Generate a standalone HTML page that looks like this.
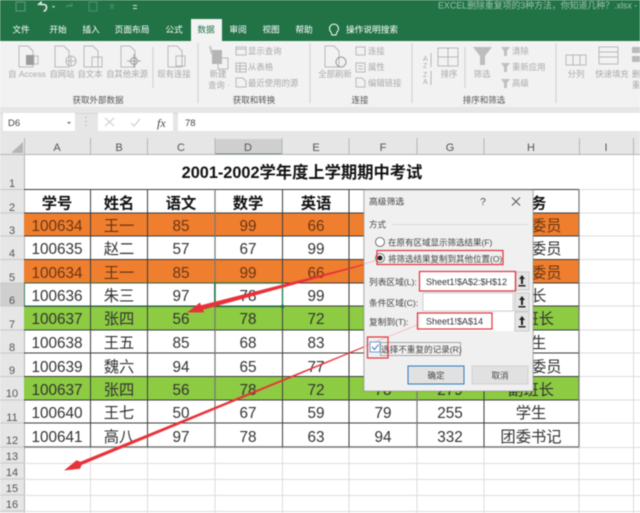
<!DOCTYPE html>
<html><head><meta charset="utf-8"><style>
html,body{margin:0;padding:0;background:#fff;width:640px;height:513px;overflow:hidden}
svg{display:block;filter:blur(.4px)}
text{font-family:"Liberation Sans","Noto Sans CJK SC",sans-serif}
.t{font-size:8.700px;fill:#fff;text-anchor:middle}
.r{font-size:8.400px;fill:#a9a9a9;text-anchor:middle}
.rl{font-size:8.400px;fill:#a9a9a9}
.g{font-size:8.500px;fill:#555;text-anchor:middle}
.i{fill:none;stroke:#b8b8b8;stroke-width:1}
.h{font-size:11px;fill:#555;text-anchor:middle}
.c{font-size:15.300px;fill:#333;text-anchor:middle}
.o{fill:#6b3514}
.b{font-size:15.300px;fill:#111;text-anchor:middle;font-weight:700}
.d{font-size:8.500px;fill:#444}
</style></head><body>
<svg width="640" height="513" viewBox="0 0 640 513" xmlns="http://www.w3.org/2000/svg">
<rect width="640" height="513" fill="#fff"/>
<!-- title / tabs -->
<rect width="640" height="41" fill="#217346"/>
<rect x="16" y="2" width="9" height="9" fill="none" stroke="#5d9a78"/>
<path d="M38 5l3-2.500v2h3q3 .5 2.500 3.500t-3 3" fill="none" stroke="#e6f0ea" stroke-width="1.600"/>
<path d="M52 6h3l-1.500 2z" fill="#cfe0d6"/>
<path d="M72 6q-3-2-6 1M72 3v3h-3" fill="none" stroke="#4f9170"/>
<rect x="89" y="2" width="8" height="9" fill="none" stroke="#4f9170"/>
<path d="M110 4l4 5M114 4l-4 5" stroke="#4f9170"/>
<rect x="133" y="5" width="4" height="1" fill="#cfe0d6"/><rect x="133" y="8" width="4" height="1" fill="#cfe0d6"/>
<text x="438" y="8.500" font-size="8.900" fill="#9cc3ac">EXCEL删除重复项的3种方法，你知道几种？.xlsx  -  E</text>
<rect x="191" y="19" width="31" height="23" fill="#f3f3f3"/>
<text class="t" x="21" y="32.500">文件</text><text class="t" x="58" y="32.500">开始</text><text class="t" x="91" y="32.500">插入</text><text class="t" x="132" y="32.500">页面布局</text><text class="t" x="174" y="32.500">公式</text>
<text class="t" x="206" y="32.500" style="fill:#217346">数据</text>
<text class="t" x="238" y="32.500">审阅</text><text class="t" x="271" y="32.500">视图</text><text class="t" x="304" y="32.500">帮助</text><text class="t" x="372" y="32.500">操作说明搜索</text>
<path d="M331 32a4.500 4.500 0 1 1 6 0l-1 3h-4z" fill="none" stroke="#fff"/>
<!-- ribbon -->
<rect y="41" width="640" height="66" fill="#f2f2f2"/>
<g stroke="#d0d0d0"><path d="M153 47v41"/><path d="M198 43v60M310 43v60M412 43v60M556 43v60"/><path d="M465 47v41"/></g>
<!-- ribbon icons -->
<g class="i">
<path d="M19 46h9l5 5v16H19z"/><path d="M55 46h9l5 5v16H55z"/><path d="M84 46h9l5 5v16H84z"/><path d="M121 46h9l5 5v16h-14z"/><path d="M168 46h9l5 5v16h-14z"/>
<circle cx="71" cy="61" r="5"/><path d="M66 61h10M71 56v10"/><rect x="92" y="57" width="10" height="10"/>
<circle cx="134" cy="61" r="3.500" stroke="#999"/><path d="M134 54v14M127 61h14" stroke="#aaa"/>
<rect x="176" y="56" width="9" height="10"/>
<rect x="236" y="47" width="10" height="8"/><rect x="236" y="63" width="10" height="9"/>
<path d="M236 66h10M236 69h10M240 63v9"/><path d="M236 78h7l3 3v6h-10zM236 47h10v2h-10"/>
<rect x="218" y="58" width="10" height="11"/>
<path d="M325 46h9l5 5v16h-14z"/><circle cx="341" cy="62" r="5" stroke="#999"/>
<rect x="356" y="47" width="9" height="8"/><rect x="356" y="63" width="9" height="9"/><path d="M358 66h5M358 69h5"/><path d="M356 78h6l3 3v6h-9z"/>
<rect x="438" y="48" width="20" height="18"/><path d="M448 48v18M438 57h20"/>
<rect x="566" y="55" width="20" height="10"/><path d="M573 55v10M580 55v10"/>
<rect x="599" y="47" width="19" height="17"/><path d="M599 52h19M599 57h19"/>
</g>
<rect x="26" y="55" width="8" height="10" fill="#9b9b9b"/><rect x="34" y="56" width="4" height="8" fill="none" stroke="#b8b8b8"/>
<rect x="212" y="50" width="10" height="14" fill="#b5b5b5"/><path d="M210 46l2 8" stroke="#c5c5c5" stroke-width="2"/>
<path d="M473 47h19l-7 9v9h-5v-9z" fill="#bdbdbd"/>
<path d="M501 47h9l-3 4v5h-3v-5z" fill="#c0c0c0"/><path d="M501 63h9l-3 4v5h-3v-5z" fill="#c0c0c0"/><path d="M501 79h9l-3 4v5h-3v-5z" fill="#c0c0c0"/>
<rect x="632" y="47" width="8" height="6" fill="#bbb"/><rect x="632" y="56" width="8" height="6" fill="#bbb"/>
<text x="423" y="61" font-size="7" fill="#aaa">A</text><text x="423" y="68" font-size="7" fill="#aaa">Z</text><text x="423" y="77" font-size="7" fill="#aaa">Z</text><text x="423" y="84" font-size="7" fill="#aaa">A</text>
<path d="M431 53v14M431 71v14" stroke="#b5b5b5"/>
<g>
<text class="r" x="27" y="77">自 Access</text><text class="r" x="62" y="77">自网站</text><text class="r" x="90" y="77">自文本</text><text class="r" x="127" y="77">自其他来源</text><text class="r" x="174" y="77">现有连接</text>
<text class="r" x="218" y="77">新建</text><text class="r" x="219" y="88">查询 ·</text>
<text class="rl" x="248" y="54">显示查询</text><text class="rl" x="248" y="70">从表格</text><text class="rl" x="248" y="86">最近使用的源</text>
<text class="r" x="335" y="77">全部刷新</text>
<text class="rl" x="368" y="54">连接</text><text class="rl" x="368" y="70">属性</text><text class="rl" x="368" y="86">编辑链接</text>
<text class="r" x="449" y="77">排序</text><text class="r" x="482" y="77">筛选</text>
<text class="rl" x="512" y="54">清除</text><text class="rl" x="512" y="70">重新应用</text><text class="rl" x="512" y="86">高级</text>
<text class="r" x="576" y="77">分列</text><text class="r" x="612" y="77">快速填充</text><text class="r" x="636" y="77">删</text><text class="r" x="636" y="88">重</text>
</g>
<text class="g" x="98" y="103">获取外部数据</text><text class="g" x="254" y="103">获取和转换</text><text class="g" x="360" y="103">连接</text><text class="g" x="484" y="103">排序和筛选</text>
<!-- formula bar -->
<rect y="107" width="640" height="31" fill="#e6e6e6"/>
<path d="M0 113.500H640" stroke="#d6d6d6"/>
<rect x="3" y="113" width="72" height="18" fill="#fff"/>
<text x="8" y="126" font-size="9.500" fill="#444">D6</text>
<path d="M67 122h4l-2 2z" fill="#666"/>
<path d="M86 117v1M86 121v1M86 125v1" stroke="#999"/>
<rect x="98" y="113" width="75" height="18" fill="#fff"/>
<path d="M105 118l9 8M114 118l-9 8" stroke="#c8c8c8"/>
<path d="M131 123l3 3 6-7" fill="none" stroke="#c8c8c8"/>
<text x="157" y="127" font-style="italic" font-size="12" fill="#444" style="font-family:'Liberation Serif',serif">fx</text>
<rect x="178" y="113" width="462" height="18" fill="#fff"/>
<text x="185" y="126" font-size="9.500" fill="#444">78</text>
<!-- column headers -->
<rect y="138" width="640" height="17" fill="#e6e6e6"/>
<rect x="0" y="155" width="24" height="358" fill="#e6e6e6"/>
<path d="M23 142v11H11z" fill="#b5b5b5"/>
<rect x="215" y="139" width="67" height="16" fill="#cfcfcf"/>
<rect x="215" y="153.500" width="67" height="1.500" fill="#217346"/>
<rect x="0" y="283" width="24" height="23" fill="#cfcfcf"/>
<path d="M0 154.500H640M24.500 138V513M90.500 138v17M147.500 138v17M215 138v17M282 138v17M349 138v17M417 138v17M484 138v17M579.500 138v17M633.500 138v17" stroke="#b5b5b5" fill="none"/>
<g class="h"><text x="57" y="151">A</text><text x="119" y="151">B</text><text x="181" y="151">C</text><text x="248" y="151">D</text><text x="316" y="151">E</text><text x="383" y="151">F</text><text x="450" y="151">G</text><text x="531" y="151">H</text><text x="606" y="151">I</text></g>
<g class="h">
<text x="12" y="187">1</text><text x="12" y="211">2</text><text x="12" y="234">3</text><text x="12" y="257">4</text><text x="12" y="281">5</text><text x="12" y="304">6</text><text x="12" y="328">7</text><text x="12" y="351">8</text><text x="12" y="374">9</text><text x="12" y="397">10</text><text x="12" y="421">11</text><text x="12" y="444">12</text><text x="12" y="460">13</text><text x="12" y="476">14</text><text x="12" y="492">15</text><text x="12" y="508">16</text>
</g>
<path d="M0 189.500H24M0 213H24M0 236H24M0 259.500H24M0 283H24M0 306H24M0 330H24M0 353H24M0 376.500H24M0 400H24M0 423H24M0 447H24M0 463H24M0 479H24M0 495H24M0 511H24" stroke="#c8c8c8"/>
<!-- grid below & right -->
<path d="M24 463.500H640M24 479.500H640M24 495.500H640M24 511.500H640M579 447.500H640M579 189.500H640M579 213H640M579 236H640M579 259.500H640M579 283H640M579 306H640M579 330H640M579 353H640M579 376.500H640M579 400H640M579 423H640M90.500 447V513M147.500 447V513M215 447V513M282.500 447V513M349 447V513M417 447V513M484 447V513M579 447V513M633.500 155V513" stroke="#dcdcdc" fill="none"/>
<!-- fills -->
<rect x="24" y="213" width="555" height="23" fill="#ef7f2e"/>
<rect x="24" y="259.500" width="555" height="23.500" fill="#ef7f2e"/>
<rect x="24" y="306" width="555" height="24" fill="#8ccb42"/>
<rect x="24" y="376.500" width="555" height="23.500" fill="#8ccb42"/>
<!-- table borders -->
<path d="M24 189.500H579M24 213H579M24 236H579M24 259.500H579M24 283H579M24 306H579M24 330H579M24 353H579M24 376.500H579M24 400H579M24 423H579" stroke="#3d3d3d" fill="none"/>
<path d="M24 447H579" stroke="#777" stroke-width="1.500"/>
<path d="M90.500 189.500V447M147.500 189.500V447M282.500 189.500V447M349 189.500V447M484 189.500V447" stroke="#3d3d3d"/>
<path d="M215 189.500V447M417 189.500V447M579 189.500V447" stroke="#777" stroke-width="1.200"/>
<!-- title -->
<text x="302" y="178" font-size="16.300" font-weight="700" text-anchor="middle" fill="#111">2001-2002学年度上学期期中考试</text>
<!-- header -->
<g class="b"><text x="57" y="208.500">学号</text><text x="119" y="208.500">姓名</text><text x="181" y="208.500">语文</text><text x="248" y="208.500">数学</text><text x="316" y="208.500">英语</text><text x="383" y="208.500">物理</text><text x="450" y="208.500">总分</text><text x="531" y="208.500">职务</text></g>
<!-- data -->
<g class="c">
<g class="o"><text x="57" y="231">100634</text><text x="119" y="231">王一</text><text x="181" y="231">85</text><text x="248" y="231">99</text><text x="316" y="231">66</text><text x="531" y="231">学习委员</text></g>
<text x="57" y="254">100635</text><text x="119" y="254">赵二</text><text x="181" y="254">57</text><text x="248" y="254">67</text><text x="316" y="254">99</text><text x="531" y="254">文娱委员</text>
<g class="o"><text x="57" y="278">100634</text><text x="119" y="278">王一</text><text x="181" y="278">85</text><text x="248" y="278">99</text><text x="316" y="278">66</text><text x="531" y="278">学习委员</text></g>
<text x="57" y="301">100636</text><text x="119" y="301">朱三</text><text x="181" y="301">97</text><text x="248" y="301">78</text><text x="316" y="301">99</text><text x="531" y="301">班长</text>
<text x="57" y="324">100637</text><text x="119" y="324">张四</text><text x="181" y="324">56</text><text x="248" y="324">78</text><text x="316" y="324">72</text><text x="531" y="324">副班长</text>
<text x="57" y="348">100638</text><text x="119" y="348">王五</text><text x="181" y="348">85</text><text x="248" y="348">68</text><text x="316" y="348">83</text><text x="531" y="348">学生</text>
<text x="57" y="372">100639</text><text x="119" y="372">魏六</text><text x="181" y="372">94</text><text x="248" y="372">65</text><text x="316" y="372">77</text><text x="531" y="372">宣传委员</text>
<text x="57" y="395">100637</text><text x="119" y="395">张四</text><text x="181" y="395">56</text><text x="248" y="395">78</text><text x="316" y="395">72</text><text x="383" y="395">78</text><text x="450" y="395">279</text><text x="531" y="395">副班长</text>
<text x="57" y="418">100640</text><text x="119" y="418">王七</text><text x="181" y="418">50</text><text x="248" y="418">67</text><text x="316" y="418">59</text><text x="383" y="418">79</text><text x="450" y="418">255</text><text x="531" y="418">学生</text>
<text x="57" y="442">100641</text><text x="119" y="442">高八</text><text x="181" y="442">97</text><text x="248" y="442">78</text><text x="316" y="442">63</text><text x="383" y="442">94</text><text x="450" y="442">332</text><text x="531" y="442">团委书记</text>
</g>
<!-- selection -->
<rect x="215" y="283" width="67.500" height="23.500" fill="none" stroke="#217346" stroke-width="1.300"/>
<rect x="24.500" y="283" width="190" height="23.500" fill="none" stroke="#217346" stroke-width=".8"/>
<rect x="281" y="305" width="3" height="3" fill="#217346"/>
<!-- arrows, beneath the dialog -->
<path d="M366 263.500l.3 1L203 309.800l1 2.600L187 312.500l13-10 1 2.700z" fill="#e8323a"/>
<path d="M366 345.500L366.400 346.500L81.750 464.900L80 468.700L64 470.500L76.600 460.300L80.450 461.700Z" fill="#e8323a"/>
<!-- dialog -->
<rect x="363" y="189" width="171" height="203" fill="#000" opacity=".1"/>
<rect x="364" y="190" width="169" height="201" fill="#f0f0f0" stroke="#a8a8a8" stroke-width=".8"/>
<text x="369" y="204.500" font-size="8.800" fill="#444">高级筛选</text>
<text x="483" y="205" font-size="10" fill="#444" text-anchor="middle">?</text>
<path d="M512 197.500l8 8M520 197.500l-8 8" stroke="#555"/>
<text class="d" x="369" y="227.500">方式</text>
<path d="M392 224.500H528" stroke="#dcdcdc"/>
<circle cx="380" cy="242" r="4.500" fill="#fff" stroke="#555" stroke-width=".8"/>
<text class="d" x="388" y="245.500">在原有区域显示筛选结果(F)</text>
<circle cx="380" cy="258" r="4.500" fill="#fff" stroke="#555" stroke-width=".8"/><circle cx="380" cy="258" r="2.500" fill="#222"/>
<text class="d" x="388" y="262">将筛选结果复制到其他位置(O)</text>
<text class="d" x="369" y="285" style="font-size:8.700px">列表区域(L):</text>
<text class="d" x="369" y="306" style="font-size:8.700px">条件区域(C):</text>
<text class="d" x="369" y="325" style="font-size:8.700px">复制到(T):</text>
<rect x="420" y="272" width="94" height="18" fill="#fff"/>
<rect x="423" y="293" width="90" height="18" fill="#fff" stroke="#bbb" stroke-width=".6"/>
<rect x="420" y="312" width="94" height="19" fill="#fff"/>
<g fill="#e4e4e4" stroke="#bbb" stroke-width=".6"><rect x="516" y="272" width="13" height="18"/><rect x="515" y="293" width="14" height="18"/><rect x="515" y="312" width="14" height="19"/></g>
<g fill="#222"><path d="M522 275l3 4h-2v5h-2v-5h-2zM518.500 285h7v1.500h-7z"/><path d="M522 296l3 4h-2v5h-2v-5h-2zM518.500 306h7v1.500h-7z"/><path d="M522 316l3 4h-2v5h-2v-5h-2zM518.500 326h7v1.500h-7z"/></g>
<text x="426" y="285" font-size="9" fill="#333">Sheet1!$A$2:$H$12</text>
<text x="426" y="324.500" font-size="9" fill="#333">Sheet1!$A$14</text>
<!-- faint arrow traces showing through the dialog -->
<path d="M364 264L376 260.500M364 346.500L417 325" stroke="#f2c4c4" stroke-width="1"/>
<rect x="370" y="342" width="10" height="10" fill="#fff" stroke="#3f8fd0" stroke-width=".8"/>
<path d="M372 347l2.500 2.500 4-5" fill="none" stroke="#2b74b8" stroke-width="1"/>
<rect x="380.500" y="342.500" width="80" height="13" fill="none" stroke="#888" stroke-width=".7"/>
<text class="d" x="381" y="352.500" style="font-size:8.600px">选择不重复的记录(R)</text>
<rect x="408" y="366" width="56" height="18" fill="#e1e1e1" stroke="#2b7cc0"/>
<text class="d" x="436" y="378.500" text-anchor="middle">确定</text>
<rect x="472" y="366" width="56" height="18" fill="#e1e1e1" stroke="#d2d2d2"/>
<text class="d" x="500" y="378.500" text-anchor="middle">取消</text>
<!-- red boxes -->
<g fill="none" stroke="#e2323c" stroke-width="1.200">
<rect x="377" y="250.500" width="126" height="14"/>
<rect x="419.500" y="271.500" width="96" height="19.500"/>
<rect x="417.500" y="313" width="74.500" height="16"/>
<rect x="367.500" y="337" width="20.500" height="21"/>
</g>
</svg>
</body></html>
